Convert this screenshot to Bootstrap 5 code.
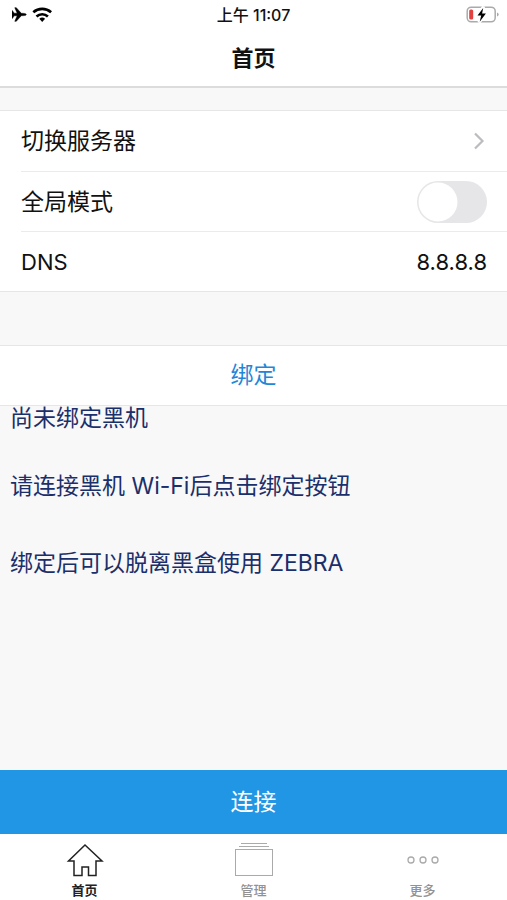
<!DOCTYPE html>
<html lang="zh-CN">
<head>
<meta charset="utf-8">
<meta name="viewport" content="width=device-width, initial-scale=1">
<title>首页</title>
<link href="https://cdn.jsdelivr.net/npm/bootstrap@5.3.0/dist/css/bootstrap.min.css" rel="stylesheet">
<style>
  body { font-family: Inter, "Noto Sans CJK SC", sans-serif; font-size: 23px; line-height: 32px; color: #111; background: #f8f8f8; }
  .status-bar { height: 30px; font-size: 16px; line-height: 30px; font-weight: 500; }
  .title-bar { height: 58px; border-bottom: 2px solid #dcdcdc; }
  .title-bar h1 { font-size: 22px; line-height: 56px; font-weight: 700; }
  .settings { margin-top: 22px; }
  .settings, .bind-btn { border-top: 1px solid #e6e6e6; border-bottom: 1px solid #e6e6e6; }
  .setting { padding-left: 21px; background: #fff; }
  .setting-line { height: 60px; padding-right: 20px; color: #111; text-decoration: none; }
  .setting + .setting .setting-line { border-top: 1px solid #ebebeb; }
  .dns-text { font-size: 22px; }
  .settings .form-switch .form-check-input {
    width: 70px; height: 42px; border: 0; background-color: #e6e6e9; box-shadow: none;
    background-image: url("data:image/svg+xml,%3Csvg xmlns='http://www.w3.org/2000/svg' viewBox='0 0 42 42'%3E%3Ccircle cx='21' cy='21' r='19.5' fill='%23fff'/%3E%3C/svg%3E");
  }
  .bind-btn { margin-top: 53px; height: 61px; background: #fff; color: #1f86d8; font-size: 23px; }
  .notes { padding: 0 10px; color: #1b2f6b; }
  .notes p { margin-bottom: 45px; }
  .notes p:first-child { margin-top: -4px; margin-bottom: 36px; }
  .connect-btn { height: 64px; background: #2196e5; color: #fff; font-size: 23px; }
  .tab-bar { height: 66px; }
  .tab-link { color: #929292; font-size: 13px; line-height: 18px; font-weight: 500; padding-top: 7px; }
  .tab-link.active { color: #222; font-weight: 700; }
</style>
</head>
<body>
<div class="d-flex flex-column min-vh-100">
  <header class="bg-white">
    <div class="status-bar row g-0 align-items-center">
      <div class="col d-flex align-items-center ps-2">
        <svg class="ms-1" width="48" height="20" viewBox="0 0 48 20" role="img" aria-label="飞行模式，Wi-Fi">
          <path d="M0 5.500h1.300L3.200 8.200l3 .1L3.800 2.700h1.500L10.300 8.300l3 .1q2 .2 2 1.100t-2 1.100l-3 .1L5.300 16.300H3.800l2.400-5.600-3 .1-1.900 2.700H0l.6-4z" transform="translate(-1 0)" stroke="#000" stroke-width=".5"/>
          <g fill="none" stroke="#000" stroke-width="2.700"><path d="M21.300 7.300a13.500 13.500 0 0 1 17.800 0"/><path d="M24.500 11.400a8.600 8.600 0 0 1 11.400 0"/></g>
          <path d="M27.300 13.800a4.500 4.500 0 0 1 5.800 0L30.200 17z"/>
        </svg>
      </div>
      <div class="col text-center">上午 11:07</div>
      <div class="col d-flex justify-content-end align-items-center pe-2">
        <svg width="34" height="20" viewBox="0 0 34 20" role="img" aria-label="电量低，正在充电">
          <rect x="2.200" y="2.200" width="28" height="14.600" rx="4" fill="none" stroke="#aaa" stroke-width="1.500"/>
          <path d="M32 7.500q1.700.5 1.700 2t-1.700 2z" fill="#aaa"/>
          <rect x="4.200" y="4.500" width="4" height="10" rx="1.500" fill="#e2413f"/>
          <path d="M18.500 1.500l-6.500 9.500h3.700l-1.700 6.500 7.500-9.300h-4z" stroke="#fff" stroke-width="3"/>
          <path d="M18.200 3l-5.700 7.500h3.700l-1.500 6.200 6.200-8.100h-3.800z"/>
        </svg>
      </div>
    </div>
    <div class="title-bar text-center"><h1 class="m-0">首页</h1></div>
  </header>

  <main class="flex-grow-1 d-flex flex-column">
    <ul class="settings list-unstyled mb-0">
      <li class="setting">
        <a href="#servers" class="setting-line d-flex align-items-center justify-content-between">切换服务器
          <svg width="16" height="20" viewBox="0 0 16 20" fill="none" stroke="#bcbcbf" stroke-width="2.200" aria-hidden="true"><path d="M4 2.500l7.500 7.500L4 17.500"/></svg>
        </a>
      </li>
      <li class="setting">
        <div class="setting-line d-flex align-items-center justify-content-between">
          <label for="global">全局模式</label>
          <div class="form-check form-switch m-0 p-0 d-flex"><input class="form-check-input m-0" type="checkbox" role="switch" id="global"></div>
        </div>
      </li>
      <li class="setting">
        <div class="setting-line dns-text d-flex align-items-center justify-content-between"><span>DNS</span><span>8.8.8.8</span></div>
      </li>
    </ul>
    <button type="button" class="bind-btn btn rounded-0 border-start-0 border-end-0 w-100 p-0">绑定</button>
    <div class="notes">
      <p>尚未绑定黑机</p>
      <p>请连接黑机 Wi-Fi后点击绑定按钮</p>
      <p>绑定后可以脱离黑盒使用 ZEBRA</p>
    </div>
  </main>

  <button type="button" class="connect-btn btn rounded-0 border-0 w-100 p-0">连接</button>
  <nav class="tab-bar nav nav-fill row g-0 bg-white" aria-label="主导航">
    <a class="tab-link active col d-flex flex-column align-items-center text-decoration-none" href="#home" aria-current="page">
      <svg width="40" height="40" viewBox="0 0 40 40" fill="none" stroke="#222" stroke-width="1.500" aria-hidden="true"><path d="M20 4L3.500 20H9v14.500h8V26h6.500v8.500H31V20h6z"/></svg>首页</a>
    <a class="tab-link col d-flex flex-column align-items-center text-decoration-none" href="#manage">
      <svg width="40" height="40" viewBox="0 0 40 40" fill="none" stroke="#aaa" aria-hidden="true"><path d="M7 2.500h26M5 5.500h30" /><rect x="1.500" y="8.500" width="37" height="26"/></svg>管理</a>
    <a class="tab-link col d-flex flex-column align-items-center text-decoration-none" href="#more">
      <svg width="40" height="40" viewBox="0 0 40 40" fill="none" stroke="#aaa" stroke-width="1.300" aria-hidden="true"><circle cx="8" cy="19" r="3"/><circle cx="20" cy="19" r="3"/><circle cx="32" cy="19" r="3"/></svg>更多</a>
  </nav>
</div>
<script src="https://cdn.jsdelivr.net/npm/bootstrap@5.3.0/dist/js/bootstrap.bundle.min.js"></script>
</body>
</html>
